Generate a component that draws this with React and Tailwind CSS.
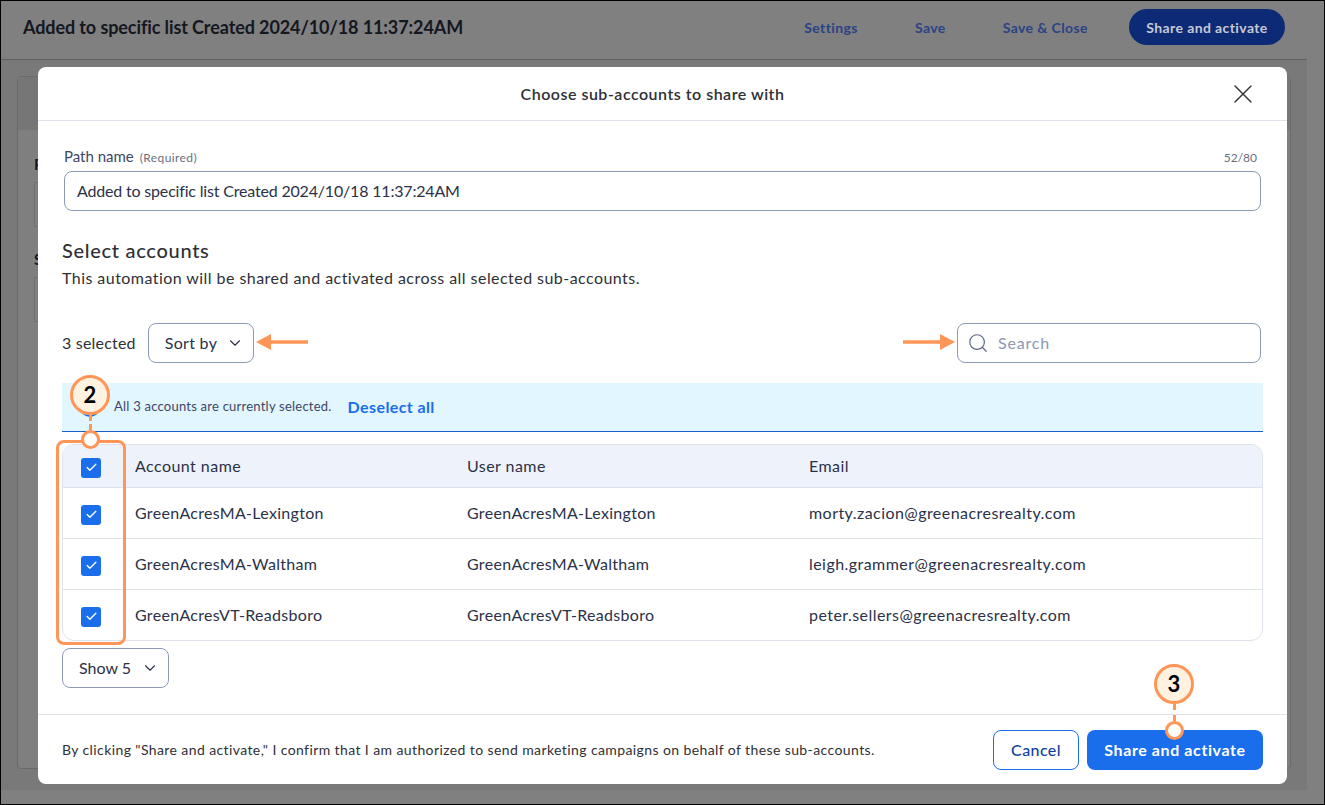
import React from "react";
import { X, ChevronDown, Search, Check } from "lucide-react";

const rows = [
  ["GreenAcresMA-Lexington", "GreenAcresMA-Lexington", "morty.zacion@greenacresrealty.com"],
  ["GreenAcresMA-Waltham", "GreenAcresMA-Waltham", "leigh.grammer@greenacresrealty.com"],
  ["GreenAcresVT-Readsboro", "GreenAcresVT-Readsboro", "peter.sellers@greenacresrealty.com"],
];

function Box() {
  return (
    <span className="mt-1 flex h-5 w-5 items-center justify-center rounded-[3px] bg-[#1a6eeb] text-white">
      <Check size={13} strokeWidth={2.5} />
    </span>
  );
}

function Row({ cells, head }) {
  const name = head ? "tracking-[0.45px]" : "tracking-[0.3px]";
  return (
    <div className={`flex items-center tracking-[0.45px] ${head ? "h-[42px] bg-[#eef2fa]" : "h-[51px] border-t border-[#dde2ec]"}`}>
      <div className="flex w-[72px] pl-[18px]"><Box /></div>
      <div className={`w-[332px] truncate ${name}`}>{cells[0]}</div>
      <div className={`w-[342px] truncate ${name}`}>{cells[1]}</div>
      <div className="flex-1 truncate">{cells[2]}</div>
    </div>
  );
}

function Callout({ n, className, line }) {
  return (
    <div className={`absolute flex flex-col items-center ${className}`}>
      <div className="flex h-10 w-10 items-center justify-center rounded-full border-[3px] border-[#ff9557] bg-[#fff2e0] text-[22px] leading-none font-bold text-black">{n}</div>
      <div className={`w-[3px] border-l-[3px] border-dashed border-[#ff9557] ${line}`} />
      <div className="h-[19px] w-[19px] rounded-full border-[3px] border-[#ff9557] bg-white" />
    </div>
  );
}

function Arrow({ className, flip }) {
  return (
    <svg className={`absolute ${className}`} width="52" height="16" viewBox="0 0 52 16">
      {flip ? <path d="M52 6.2H15V0L0 8l15 8V9.8h37z" fill="#ff9557" /> : <path d="M0 6.2h37V0l15 8-15 8V9.8H0z" fill="#ff9557" />}
    </svg>
  );
}

export default function App() {
  return (
    <div className="relative flex h-[805px] w-[1325px] flex-col overflow-hidden border border-black bg-[#808080] font-['Lato','Noto_Sans',sans-serif] text-[16px] text-[#2b3148]">
      <header className="mr-[17px] flex h-[59px] shrink-0 items-center justify-between border-b border-[#5f5f5f] pb-[6px] pl-[22px]">
        <div className="text-[18px] font-bold tracking-[-0.1px] text-[#15171f]">Added to specific list Created 2024/10/18 11:37:24AM</div>
        <div className="mr-[22px] flex items-center text-[14px] font-bold tracking-[0.4px] text-[#2a4384]">
          <span className="mr-[57px]">Settings</span>
          <span className="mr-[57px]">Save</span>
          <span className="mr-[41px]">Save &amp; Close</span>
          <span className="flex h-9 w-[156px] items-center justify-center rounded-full bg-[#0c2a75] text-[#c6c9d3]">Share and activate</span>
        </div>
      </header>
      <main className="mb-[14px] mr-[17px] flex-1 bg-[#797979] px-4 pb-[21px] pt-4">
        <div className="h-full overflow-hidden rounded border border-[#6a6a6a] bg-[#7f7f7f]">
          <div className="h-[53px] bg-[#767676]" />
          <div className="pl-4 pt-6 text-[15px] font-bold leading-5 text-[#15171f]">P</div>
          <div className="ml-4 mt-2 h-[45px] w-10 border border-[#6f6f6f]" />
          <div className="pl-4 pt-[22px] text-[15px] font-bold leading-5 text-[#15171f]">S</div>
          <div className="ml-4 mt-2 h-[45px] w-10 border border-[#6f6f6f]" />
        </div>
      </main>

      <section className="absolute left-[37px] top-[66px] flex h-[717px] w-[1249px] flex-col rounded-lg bg-white">
        <div className="relative flex h-[54px] shrink-0 items-center justify-center border-b border-[#dde2ec] pr-5 text-[16px] font-semibold tracking-[0.5px] text-[#2e3036]">
          <span>Choose sub-accounts to share with</span>
          <X className="absolute right-[28px] top-[11px] text-[#333]" size={32} strokeWidth={1} />
        </div>

        <div className="flex flex-1 flex-col px-6">
          <div className="mx-[2px] mt-6 flex items-baseline justify-between text-[#3d4666]">
            <div className="text-[15px]">Path name <span className="ml-[2px] text-[12px] tracking-[0.4px] text-[#6a6f7d]">(Required)</span></div>
            <div className="mr-1 text-[12px] text-[#6a6f7d]">52/80</div>
          </div>
          <div className="mx-[2px] mt-[3px] flex h-10 items-center rounded-lg border border-[#8c9ab8] px-3 tracking-[-0.18px]">Added to specific list Created 2024/10/18 11:37:24AM</div>

          <h2 className="mt-[27px] text-[20px] leading-6 font-medium tracking-[0.7px] text-[#2e3036]">Select accounts</h2>
          <p className="mt-1 text-[16px] leading-6 tracking-[0.45px] text-[#2e3036]">This automation will be shared and activated across all selected sub-accounts.</p>

          <div className="mt-[33px] flex h-10 shrink-0 items-center justify-between">
            <div className="flex items-center gap-3 tracking-[0.2px]">
              <span className="text-[#2e3036]">3 selected</span>
              <div className="flex h-10 w-[106px] items-center justify-between rounded-lg border border-[#8c9ab8] pl-4 pr-[9px] tracking-[0.3px]">
                Sort by <ChevronDown size={18} strokeWidth={1.5} />
              </div>
            </div>
            <div className="mr-[2px] flex h-10 w-[304px] items-center gap-[9px] rounded-lg border border-[#8c9ab8] pl-[9px] tracking-[0.8px] text-[#8b97b5]">
              <Search size={22} strokeWidth={1.3} className="text-[#5e6a87]" /> Search
            </div>
          </div>

          <div className="mt-5 flex h-[49px] shrink-0 items-center border-b border-[#1a5fc4] bg-[#e2f6ff] pl-[18px] text-[13px] tracking-[0.23px] text-[#3d4666]">
            <span className="mr-[14px] h-5 w-5 rounded-full border-2 border-[#1a6eeb]" />
            <span>All 3 accounts are currently selected.</span>
            <span className="ml-4 text-[16px] font-bold tracking-[0.4px] text-[#1a6eeb]">Deselect all</span>
          </div>

          <div className="mt-3 shrink-0 overflow-hidden rounded-xl border border-[#dde2ec]">
            <Row head cells={["Account name", "User name", "Email"]} />
            {rows.map((r) => <Row key={r[0]} cells={r} />)}
          </div>

          <div className="mt-[7px] flex h-10 w-[107px] shrink-0 items-center justify-between rounded-lg border border-[#8c9ab8] pl-4 pr-[9px]">
            Show 5 <ChevronDown size={18} strokeWidth={1.5} />
          </div>

          <div className="-mx-6 mt-[26px] flex flex-1 items-center justify-between border-t border-[#dde2ec] px-6">
            <span className="text-[14px] tracking-[0.4px] text-[#2e3036]">By clicking "Share and activate," I confirm that I am authorized to send marketing campaigns on behalf of these sub-accounts.</span>
            <div className="mt-[1px] flex gap-2">
              <span className="flex h-10 w-[86px] items-center justify-center rounded-lg border border-[#1a6eeb] font-medium tracking-[0.4px] text-[#0f3f9e]">Cancel</span>
              <span className="flex h-10 w-[176px] items-center justify-center rounded-lg bg-[#1a6eeb] font-bold tracking-[0.6px] text-white">Share and activate</span>
            </div>
          </div>
        </div>
      </section>

      <div className="absolute left-[55px] top-[439px] h-[205px] w-[70px] rounded-lg border-[3px] border-[#ff9557]" />
      <Callout n="2" className="left-[69px] top-[374px]" line="h-[15px]" />
      <Callout n="3" className="left-[1153px] top-[663px]" line="h-[17px]" />
      <Arrow flip className="left-[255px] top-[333px]" />
      <Arrow className="left-[902px] top-[333px]" />
    </div>
  );
}
